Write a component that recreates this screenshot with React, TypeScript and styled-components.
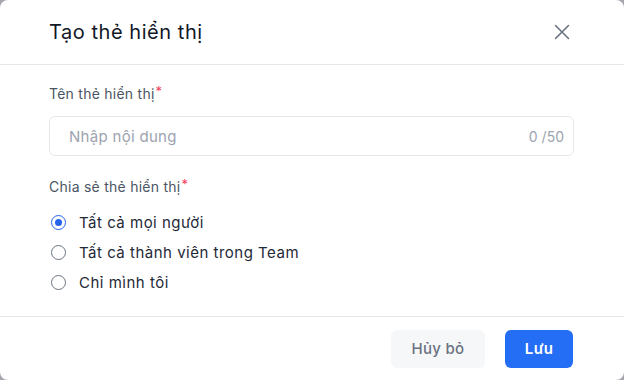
import React from "react";
import styled, { createGlobalStyle } from "styled-components";

const Global = createGlobalStyle`
  html, body { margin: 0; padding: 0; background: #a3a6ad; }
  body { font-family: Inter, "Noto Sans", sans-serif; }
  * { box-sizing: border-box; }
`;

const Modal = styled.div`
  width: 624px;
  height: 380px;
  background: #ffffff;
  border-radius: 8px;
  display: flex;
  flex-direction: column;
  overflow: hidden;
`;

const Header = styled.div`
  height: 65px;
  display: flex;
  align-items: center;
  justify-content: space-between;
  padding: 0 52px 0 49px;
  border-bottom: 1px solid #e5e7eb;
`;

const Title = styled.h1`
  margin: 0;
  font-size: 20px;
  font-weight: 400;
  color: #111827;
  letter-spacing: 0.55px;
`;

const CloseBtn = styled.button`
  border: none;
  background: none;
  padding: 0;
  width: 20px;
  height: 20px;
  display: flex;
  align-items: center;
  justify-content: center;
  color: #6b7280;
  cursor: pointer;
`;

const Body = styled.div`
  flex: 1;
  padding: 19px 50px 0 49px;
  display: flex;
  flex-direction: column;
`;

const Label = styled.div`
  font-size: 14px;
  color: #4b5563;
  line-height: 20px;
  letter-spacing: 0.25px;
  display: flex;
  align-items: flex-start;
`;

const Star = styled.span`
  color: #f43f5e;
  font-size: 13px;
  line-height: 14px;
  margin-left: 1px;
`;

const InputBox = styled.div`
  margin-top: 12px;
  height: 40px;
  border: 1px solid #e5e7eb;
  border-radius: 6px;
  display: flex;
  align-items: center;
  padding: 0 9px 0 19px;
`;

const Input = styled.input`
  flex: 1;
  border: none;
  outline: none;
  font-family: inherit;
  font-size: 15px;
  letter-spacing: 0.3px;
  color: #111827;
  background: transparent;
  padding: 0;
  &::placeholder { color: #9ca3af; }
`;

const Counter = styled.span`
  font-size: 14px;
  color: #9ca3af;
`;

const Section = styled.div`
  margin-top: 21px;
`;

const RadioList = styled.div`
  margin-top: 15px;
  display: flex;
  flex-direction: column;
  gap: 10px;
`;

const RadioRow = styled.label`
  display: flex;
  align-items: center;
  gap: 13px;
  height: 20px;
  padding-left: 2px;
  font-size: 15px;
  letter-spacing: 0.5px;
  color: #1f2937;
  cursor: pointer;
`;

const Circle = styled.span<{ $on: boolean }>`
  width: 15px;
  height: 15px;
  border-radius: 50%;
  border: 1.5px solid ${(p) => (p.$on ? "#2563eb" : "#6b7280")};
  display: flex;
  align-items: center;
  justify-content: center;
  &::after {
    content: "";
    width: 7px;
    height: 7px;
    border-radius: 50%;
    background: ${(p) => (p.$on ? "#2563eb" : "transparent")};
  }
`;

const Footer = styled.div`
  height: 64px;
  border-top: 1px solid #e5e7eb;
  display: flex;
  align-items: center;
  justify-content: flex-end;
  gap: 20px;
  padding: 0 51px 0 0;
`;

const Button = styled.button<{ $primary?: boolean }>`
  height: 38px;
  width: ${(p) => (p.$primary ? "68px" : "94px")};
  padding: 0;
  border: none;
  border-radius: 6px;
  font-family: inherit;
  font-size: 15px;
  letter-spacing: 0.3px;
  font-weight: ${(p) => (p.$primary ? 600 : 500)};
  background: ${(p) => (p.$primary ? "#246ef5" : "#f5f7f9")};
  color: ${(p) => (p.$primary ? "#ffffff" : "#6b7280")};
  cursor: pointer;
`;

const options = ["Tất cả mọi người", "Tất cả thành viên trong Team", "Chỉ mình tôi"];

export default function App() {
  const [sel, setSel] = React.useState(0);
  return (
    <>
      <Global />
      <Modal>
        <Header>
          <Title>Tạo thẻ hiển thị</Title>
          <CloseBtn aria-label="close">
            <svg width="16" height="16" viewBox="0 0 16 16" fill="none">
              <path d="M1.5 1.5L14.5 14.5M14.5 1.5L1.5 14.5" stroke="currentColor" strokeWidth="1.6" strokeLinecap="round" />
            </svg>
          </CloseBtn>
        </Header>
        <Body>
          <Label>
            Tên thẻ hiển thị<Star>*</Star>
          </Label>
          <InputBox>
            <Input placeholder="Nhập nội dung" />
            <Counter>0 /50</Counter>
          </InputBox>
          <Section>
            <Label>
              Chia sẻ thẻ hiển thị<Star>*</Star>
            </Label>
            <RadioList>
              {options.map((o, i) => (
                <RadioRow key={o} onClick={() => setSel(i)}>
                  <Circle $on={sel === i} />
                  {o}
                </RadioRow>
              ))}
            </RadioList>
          </Section>
        </Body>
        <Footer>
          <Button>Hủy bỏ</Button>
          <Button $primary>Lưu</Button>
        </Footer>
      </Modal>
    </>
  );
}
